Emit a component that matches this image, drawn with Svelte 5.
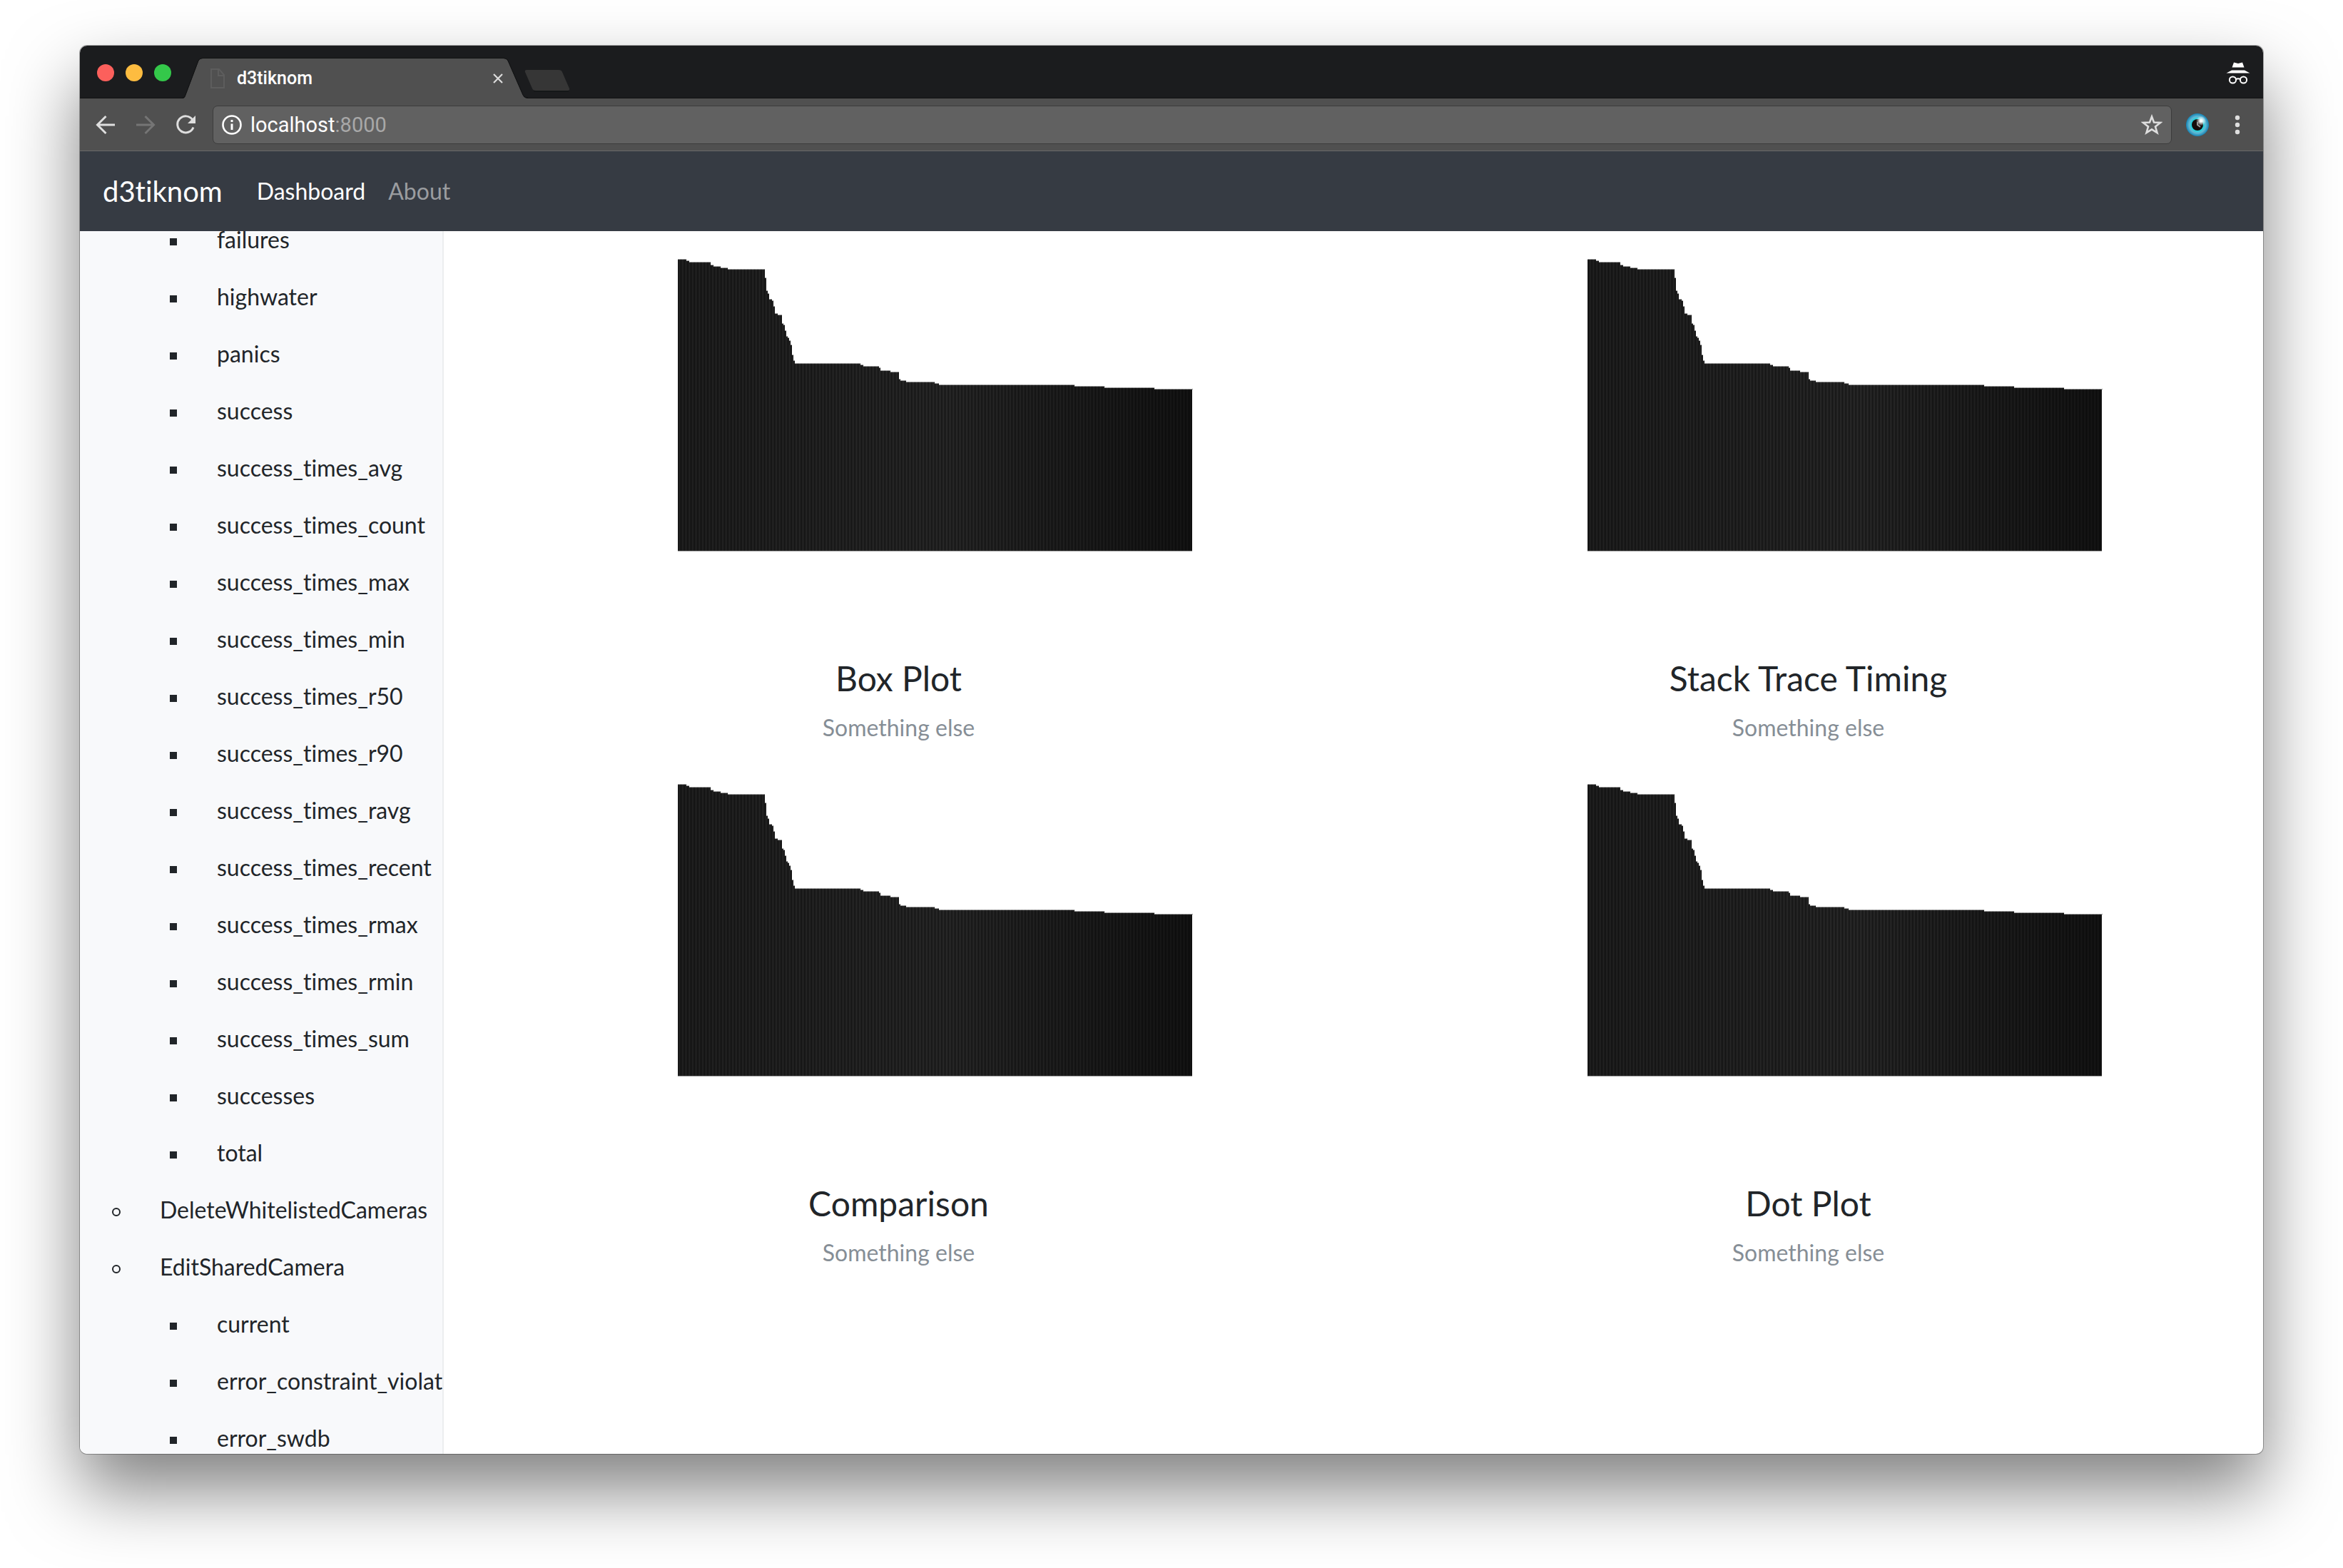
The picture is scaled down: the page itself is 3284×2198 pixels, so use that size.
<script>
  import { onMount } from 'svelte';

  const groups = [
    {
      name: null,
      metrics: [
        'failures', 'highwater', 'panics', 'success', 'success_times_avg', 'success_times_count',
        'success_times_max', 'success_times_min', 'success_times_r50', 'success_times_r90',
        'success_times_ravg', 'success_times_recent', 'success_times_rmax', 'success_times_rmin',
        'success_times_sum', 'successes', 'total'
      ]
    },
    { name: 'DeleteWhitelistedCameras', metrics: [] },
    { name: 'EditSharedCamera', metrics: ['current', 'error_constraint_violation', 'error_swdb'] }
  ];

  const plots = ['Box Plot', 'Stack Trace Timing', 'Comparison', 'Dot Plot'];

  // [first x, top y] of each run of equal bars
  const steps = [
    [0, 0], [12, 2], [16, 4], [46, 8], [50, 10], [60, 12], [70, 14], [122, 26], [124, 44],
    [126, 48], [128, 56], [132, 58], [134, 66], [136, 76], [140, 78], [146, 90], [148, 92],
    [150, 100], [152, 108], [154, 110], [156, 114], [158, 120], [160, 134], [162, 142],
    [164, 146], [256, 148], [260, 150], [282, 152], [284, 156], [298, 158], [310, 168],
    [312, 170], [320, 172], [360, 174], [366, 176], [556, 178], [598, 180], [668, 182]
  ];
  const chartWidth = 721;
  const chartBase = 408;

  let outline = `M0 ${chartBase}`;
  for (const [x, y] of steps) outline += `H${x}V${y}`;
  outline += `H${chartWidth}V${chartBase}Z`;

  function shade(x) {
    const peak = 380;
    const level = x < peak ? 51 + (x / peak) * 13 : 64 - ((x - peak) / (chartWidth - peak)) * 32;
    const v = Math.round(level);
    return `rgb(${v},${v},${v})`;
  }

  const bars = [];
  let run = 0;
  for (let x = 0; x < chartWidth; x += 2) {
    while (run + 1 < steps.length && steps[run + 1][0] <= x) run += 1;
    bars.push({ x, y: steps[run][1], fill: shade(x) });
  }

  let sidebar;
  onMount(() => {
    sidebar.scrollTop = 28;
  });
</script>

<div class="desktop">
  <div class="window">
    <div class="tabs">
      <div class="lights">
        <button class="light close" aria-label="Close window"></button>
        <button class="light minimise" aria-label="Minimise window"></button>
        <button class="light zoom" aria-label="Zoom window"></button>
      </div>
      <div class="tab">
        <svg class="tabshape" viewBox="0 0 484 57" width="484" height="57" aria-hidden="true">
          <path d="M0 57Q3 57 4 53L22 5Q24 1 28 1H450Q454 1 456 5L477 53Q479 57 484 57Z" fill="#505050" />
          <path d="M0 56Q3 56 4 52L22 4Q24 .5 28 .5H450Q454 .5 456 4L477 52Q479 56 484 56" fill="none" stroke="#111213" />
        </svg>
        <div class="tabrow">
          <svg viewBox="0 0 22 28" width="22" height="28" aria-hidden="true">
            <path d="M2 1H13L20 9V27H2ZM12 1V10H20" fill="none" stroke="#5d5d5d" stroke-width="2" />
          </svg>
          <span class="tabtitle">d3tiknom</span>
          <button class="icon" aria-label="Close tab">
            <svg viewBox="0 0 16 16" width="16" height="16"><path d="M2 2L14 14M14 2L2 14" stroke="#dcdcdc" stroke-width="2.2" /></svg>
          </button>
        </div>
      </div>
      <button class="newtab" aria-label="New tab">
        <svg viewBox="0 0 66 32" width="66" height="32">
          <path d="M4 1H49Q53 1 54 4L64 27Q65 30 62 30H17Q13 30 12 27L2 4Q1 1 4 1Z" fill="#363636" />
          <path d="M14 31H63" stroke="#111213" />
        </svg>
      </button>
      <svg class="incognito" viewBox="0 0 34 32" width="34" height="32" aria-label="Incognito" role="img">
        <path d="M11 1.5L17 3L23 1.5L25.500 8.500H8.500ZM8 12.500H26L33.500 16.500H.5Z" fill="#fff" />
        <g fill="none" stroke="#fff" stroke-width="2">
          <circle cx="9.500" cy="26" r="4.600" />
          <circle cx="24.500" cy="26" r="4.600" />
          <path d="M14 25Q17 23.500 20 25" />
        </g>
      </svg>
    </div>

    <div class="toolbar">
      <button class="icon" aria-label="Back">
        <svg viewBox="0 0 28 28" width="28" height="28"><path d="M27 14H3M14.500 2L2.500 14L14.500 26" fill="none" stroke="#dedede" stroke-width="3" /></svg>
      </button>
      <button class="icon" aria-label="Forward" disabled>
        <svg viewBox="0 0 28 28" width="28" height="28"><path d="M1 14H25M13.500 2L25.500 14L13.500 26" fill="none" stroke="#757575" stroke-width="3" /></svg>
      </button>
      <button class="icon" aria-label="Reload">
        <svg viewBox="0 0 28 28" width="28" height="28">
          <path d="M23.500 6.500A11.500 11.500 0 1 0 25 17.500" fill="none" stroke="#dedede" stroke-width="3" />
          <path d="M28 1V12H17Z" fill="#dedede" />
        </svg>
      </button>
      <div class="omnibox">
        <svg viewBox="0 0 28 28" width="28" height="28" aria-hidden="true">
          <circle cx="14" cy="14" r="12.500" fill="none" stroke="#fff" stroke-width="2.600" />
          <path d="M14 7V10M14 12.500V21" stroke="#fff" stroke-width="3" />
        </svg>
        <span class="address">localhost<span class="port">:8000</span></span>
        <button class="icon" aria-label="Bookmark this page">
          <svg viewBox="0 0 30 30" width="30" height="30">
            <path d="M15 3.500L18 11.500L27 12L20 17.500L22.500 26L15 21.300L7.500 26L10 17.500L3 12L12 11.500Z" fill="none" stroke="#dedede" stroke-width="2.600" />
          </svg>
        </button>
      </div>
      <button class="icon" aria-label="Extension">
        <svg viewBox="0 0 32 32" width="32" height="32">
          <defs>
            <radialGradient id="iris">
              <stop offset="0.500" stop-color="#19d8e0" />
              <stop offset="0.720" stop-color="#62b8d4" />
              <stop offset="1" stop-color="#1583b4" />
            </radialGradient>
            <radialGradient id="glint">
              <stop offset="0.200" stop-color="#fff" />
              <stop offset="1" stop-color="#fff" stop-opacity="0" />
            </radialGradient>
          </defs>
          <circle cx="16" cy="16" r="16" fill="url(#iris)" />
          <circle cx="16" cy="16" r="8" fill="#160c0c" />
          <circle cx="21" cy="10.500" r="7" fill="url(#glint)" />
          <path d="M16 12V16L20 19" fill="none" stroke="#999" stroke-width="2" />
        </svg>
      </button>
      <button class="icon menu" aria-label="Menu">
        <svg viewBox="0 0 8 28" width="8" height="28">
          <g fill="#dedede"><circle cx="4" cy="4" r="3.200" /><circle cx="4" cy="14" r="3.200" /><circle cx="4" cy="24" r="3.200" /></g>
        </svg>
      </button>
    </div>

    <nav class="navbar">
      <a class="brand" href="#top">d3tiknom</a>
      <a class="active" href="#dashboard">Dashboard</a>
      <a href="#about">About</a>
    </nav>

    <div class="content">
      <aside class="sidebar" bind:this={sidebar}>
        <ul class="groups">
          {#each groups as group}
            <li class="group">
              {#if group.name}<span class="label round">{group.name}</span>{/if}
              {#if group.metrics.length}
                <ul class="metrics">
                  {#each group.metrics as metric}
                    <li class="label square">{metric}</li>
                  {/each}
                </ul>
              {/if}
            </li>
          {/each}
        </ul>
      </aside>
      <main class="plots">
        {#each plots as title}
          <section class="plot">
            <svg class="chart" viewBox="-102 0 823 410" width="823" height="410" role="img" aria-label={title}>
              <g shape-rendering="crispEdges">
                <path d={outline} fill="#000" />
                {#each bars as bar}
                  <rect x={bar.x} y={bar.y} width="1" height={chartBase - bar.y} fill={bar.fill} />
                  <rect x={bar.x} y={bar.y - 1} width="1" height="1" fill="#b0b0b0" />
                  <rect x={bar.x + 1} y={bar.y - 1} width="1" height="1" fill="#808080" />
                {/each}
                <rect x="0" y={chartBase} width={chartWidth} height="1" fill="#999" />
              </g>
            </svg>
            <h4>{title}</h4>
            <p>Something else</p>
          </section>
        {/each}
      </main>
    </div>
  </div>
</div>

<style>
  :global(body) {
    background: #fff;
  }
  .desktop {
    box-sizing: border-box;
    height: 100vh;
    padding: 64px 112px 160px;
    overflow: hidden;
    font-family: Lato, 'Liberation Sans', sans-serif;
    font-size: 32px;
    font-variant-ligatures: none;
    line-height: 48px;
    color: #212529;
  }
  .window {
    display: flex;
    flex-direction: column;
    height: 100%;
    overflow: hidden;
    border-radius: 10px;
    background: #fff;
    box-shadow: 0 0 0 1px rgba(0, 0, 0, 0.3), 0 50px 100px rgba(0, 0, 0, 0.5);
  }
  button {
    padding: 0;
    border: 0;
    background: none;
    flex: none;
  }
  svg {
    display: block;
    flex: none;
  }
  .icon {
    display: flex;
  }
  .tabs {
    box-sizing: border-box;
    flex: none;
    display: flex;
    align-items: flex-end;
    height: 74px;
    padding: 3px 18px 0 24px;
    background: #1b1c1e;
    border-bottom: 1px solid #111213;
  }
  .lights {
    display: flex;
    gap: 16px;
    align-self: center;
    margin-right: 16px;
  }
  .light {
    width: 24px;
    height: 24px;
    border-radius: 50%;
  }
  .close { background: #fc605c; }
  .minimise { background: #fdbc40; }
  .zoom { background: #34c84a; }
  .tab {
    position: relative;
    width: 484px;
    height: 57px;
    margin-bottom: -1px;
  }
  .tabshape {
    position: absolute;
    inset: 0;
  }
  .tabrow {
    position: relative;
    display: flex;
    align-items: center;
    gap: 16px;
    height: 100%;
    padding: 0 34px 0 38px;
  }
  .tabtitle {
    flex: 1;
    font-family: Roboto, sans-serif;
    font-size: 25px;
    font-weight: 500;
    line-height: 32px;
    color: #fff;
  }
  .newtab {
    margin: 0 0 8px -6px;
  }
  .incognito {
    align-self: center;
    margin-left: auto;
  }
  .toolbar {
    box-sizing: border-box;
    flex: none;
    display: flex;
    align-items: center;
    gap: 28px;
    height: 74px;
    padding: 0 32px 0 22px;
    background: #505050;
    border-bottom: 1px solid #6a6a6a;
  }
  .menu {
    margin-left: 8px;
  }
  .omnibox {
    box-sizing: border-box;
    flex: 1;
    display: flex;
    align-items: center;
    gap: 12px;
    height: 54px;
    margin: 0 -8px 0 -4px;
    padding: 0 12px;
    border: 1px solid #3c3c3c;
    border-radius: 7px;
    background: #616161;
  }
  .address {
    flex: 1;
    font-family: Roboto, sans-serif;
    font-size: 29px;
    line-height: 36px;
    color: #fff;
  }
  .port {
    color: #a8a8a8;
  }
  .navbar {
    box-sizing: border-box;
    flex: none;
    display: flex;
    align-items: center;
    gap: 32px;
    padding: 26px 32px;
    background: #363b43;
    line-height: 60px;
  }
  .navbar a {
    color: #9b9da0;
    text-decoration: none;
  }
  .navbar .brand {
    margin-right: 16px;
    font-size: 40px;
    color: #fff;
  }
  .navbar .active {
    color: #fff;
  }
  .content {
    flex: 1;
    display: flex;
    min-height: 0;
  }
  .sidebar {
    box-sizing: border-box;
    flex: none;
    width: 16.6667%;
    overflow: hidden;
    border-right: 2px solid #eceeef;
    background: #f8f9fb;
  }
  .groups,
  .metrics {
    margin: 0;
    padding: 0;
    list-style: none;
    white-space: nowrap;
  }
  .groups {
    padding-left: 112px;
  }
  .metrics {
    padding-left: 80px;
  }
  .label {
    position: relative;
    display: block;
    padding: 16px 0;
  }
  .label::before {
    content: '';
    position: absolute;
    box-sizing: border-box;
    top: 38px;
  }
  .square::before {
    left: -66px;
    width: 10px;
    height: 10px;
    background: #212529;
  }
  .round::before {
    left: -67px;
    top: 37px;
    width: 12px;
    height: 12px;
    border: 2px solid #212529;
    border-radius: 50%;
  }
  .plots {
    flex: 1;
    display: grid;
    grid-template-columns: 1fr 1fr;
    align-content: start;
    row-gap: 56px;
    padding-top: 40px;
  }
  .plot {
    display: flex;
    flex-direction: column;
    align-items: center;
    text-align: center;
  }
  .chart {
    overflow: visible;
  }
  h4 {
    margin: 150px 0 18px;
    font-size: 48px;
    font-weight: 400;
    line-height: 54px;
  }
  p {
    margin: 0;
    color: #868e96;
  }
</style>
